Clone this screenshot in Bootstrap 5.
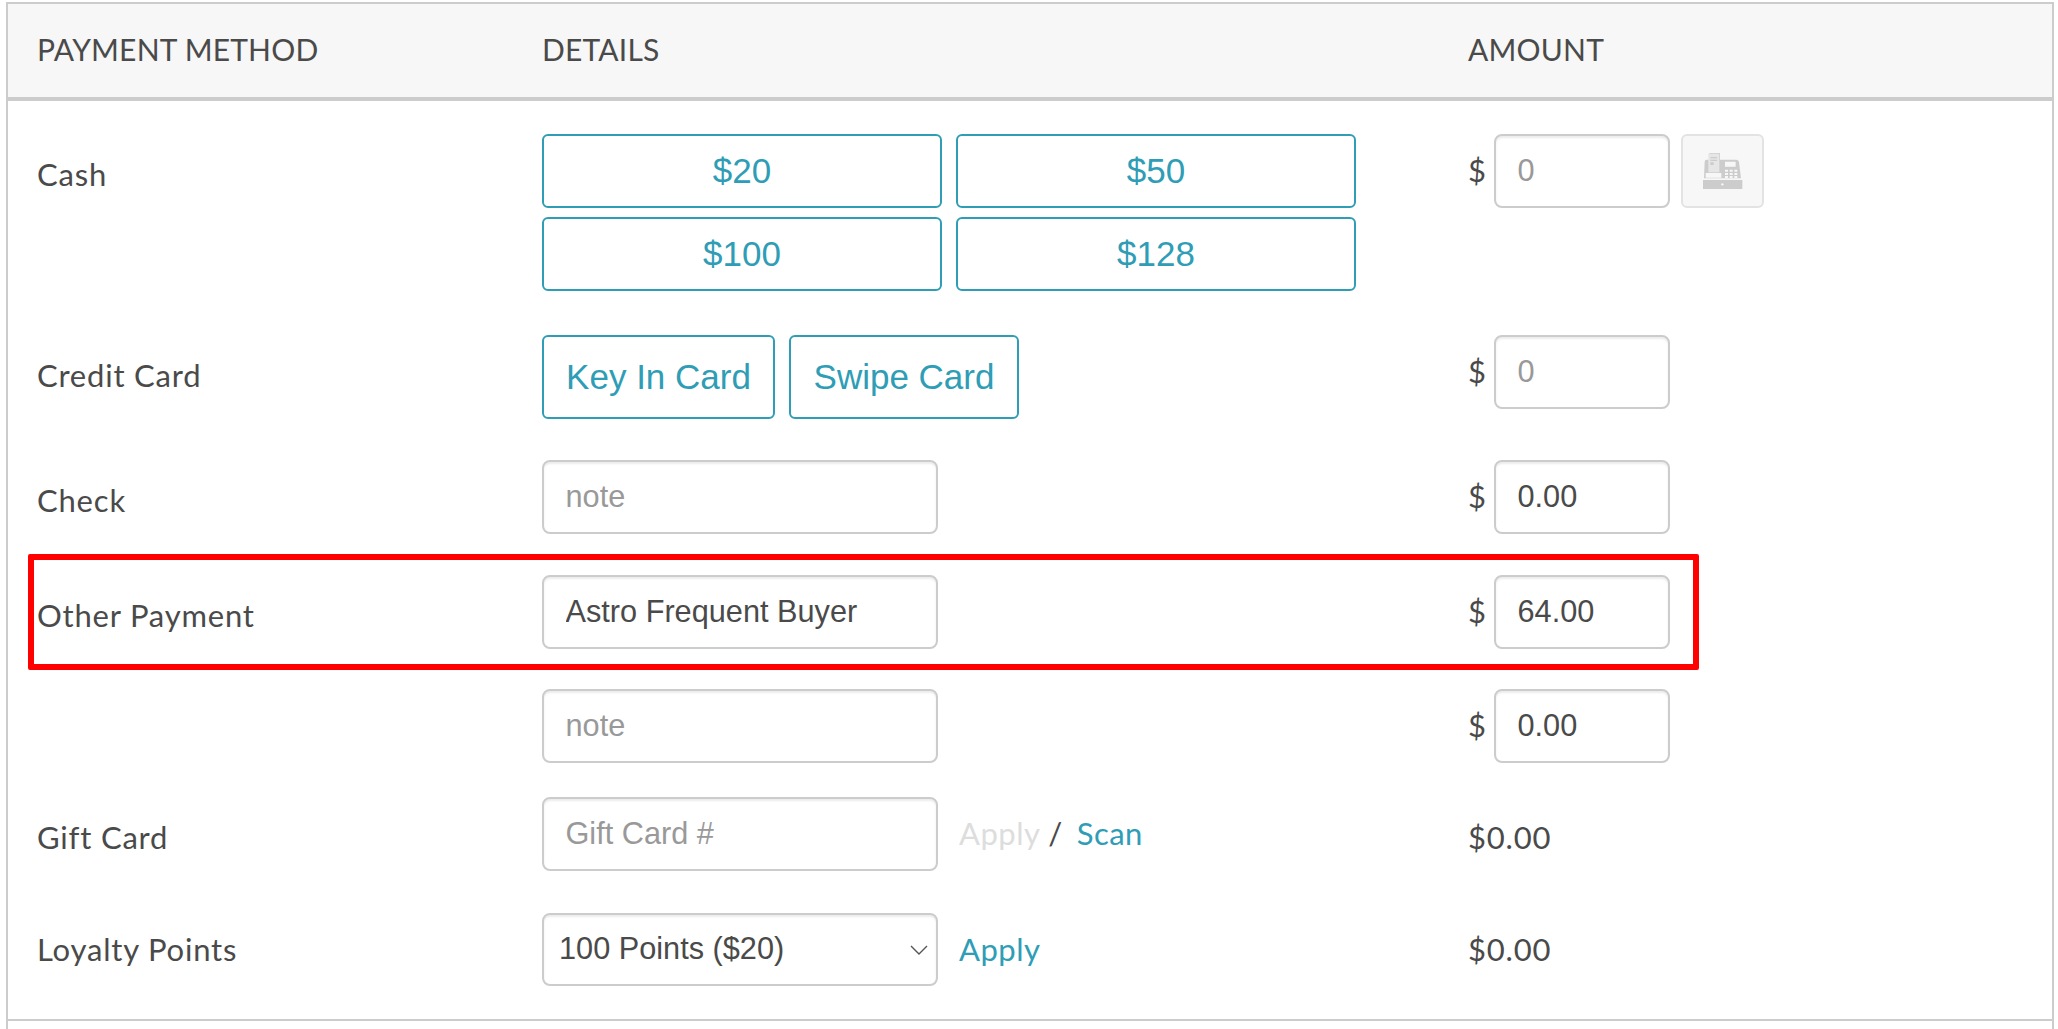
<!DOCTYPE html>
<html lang="en">

<head>
    <meta charset="UTF-8">
    <meta name="viewport" content="width=device-width, initial-scale=1.0">
    <title>Payment</title>
    <link href="https://cdn.jsdelivr.net/npm/bootstrap@5.3.0/dist/css/bootstrap.min.css" rel="stylesheet">
    <style>
        body {
            height: 1029px;
            overflow: hidden;
            font-family: Lato, "Liberation Sans", sans-serif;
            color: #4a4a4a;
            font-size: 31px;
            letter-spacing: .8px;
        }

        .pay-panel {
            margin: 2px 4px 0 6px;
            height: 1027px;
            border: 2px solid #ccc;
            border-bottom: 0;
        }

        .pay-head {
            height: 97px;
            background: #f7f7f7;
            border-bottom: 4px solid #ccc;
            align-items: center;
            font-size: 30px;
            letter-spacing: .2px;
            padding-bottom: 3px;
        }

        .col-method {
            width: 534px;
            padding-left: 29px;
            flex: none;
        }

        .col-details {
            width: 926px;
            flex: none;
        }

        .pay-body {
            border-bottom: 2px solid #ccc;
            height: 920px;
            position: relative;
        }

        .pay-row {
            position: relative;
        }

        .row-cash { padding-top: 33px; }
        .row-credit { padding-top: 44px; }
        .row-check { padding-top: 41px; }
        .row-other { padding-top: 41px; }
        .row-note { padding-top: 40px; }
        .row-gift { padding-top: 34px; }
        .row-loyalty { padding-top: 42px; }

        .pay-label {
            line-height: 40px;
            padding-top: 20px;
        }

        .row-loyalty .pay-label { padding-top: 16px; }

        .cash-grid {
            display: grid;
            grid-template-columns: 400px 400px;
            grid-auto-rows: 74px;
            gap: 9px 14px;
        }

        .btn.btn-pay {
            --bs-btn-color: #2e9db5;
            --bs-btn-border-color: #2e9db5;
            --bs-btn-hover-color: #fff;
            --bs-btn-hover-bg: #2e9db5;
            --bs-btn-hover-border-color: #2e9db5;
            --bs-btn-border-width: 2px;
            --bs-btn-border-radius: 6px;
            font-family: "Liberation Sans", sans-serif;
            font-size: 35px;
            line-height: 1;
            letter-spacing: 0;
            padding-bottom: 8px;
        }

        .btn.btn-card {
            height: 84px;
            width: 233px;
            padding: 0 0 2px;
        }

        .btn.btn-swipe { width: 230px; }

        .card-gap { gap: 14px; }

        .form-control.pay-input,
        .form-select.pay-input {
            height: 74px;
            border: 2px solid #ccc;
            border-radius: 8px;
            box-shadow: inset 0 2px 2px rgba(0, 0, 0, .08);
            font-family: "Liberation Sans", sans-serif;
            font-size: 30.7px;
            letter-spacing: 0;
            color: #4a4a4a;
            padding: 0 21.5px 1px;
        }

        .pay-input::placeholder {
            color: #999;
        }

        .input-note {
            width: 396px;
            flex: none;
        }

        .input-amount {
            width: 176px;
            flex: none;
        }

        .form-select.input-points {
            padding: 0 40px 0 15px;
            height: 73px;
            background-image: url("data:image/svg+xml,%3csvg xmlns='http://www.w3.org/2000/svg' viewBox='0 0 18 10'%3e%3cpath fill='none' stroke='%23555' stroke-width='1.4' d='M1 1l8 8 8-8'/%3e%3c/svg%3e");
            background-size: 18px 10px;
            background-position: right 8px center;
        }

        .dollar {
            width: 26px;
            flex: none;
            line-height: 40px;
            padding-top: 16px;
            letter-spacing: 0;
        }

        .link-pay {
            color: #2e9db5;
            text-decoration: none;
        }

        .link-off {
            color: #ddd;
            text-decoration: none;
        }

        .side-links {
            margin-left: 21px;
            line-height: 40px;
            margin-top: 16px;
            letter-spacing: .5px;
        }

        .link-scan { margin-left: 14px; }

        .till-btn {
            width: 83px;
            height: 74px;
            margin-left: 11px;
            background: #f7f7f7;
            border: 2px solid #e3e3e3;
            border-radius: 6px;
            padding: 0;
        }

        .red-box {
            position: absolute;
            left: 20px;
            top: 20px;
            width: 1671px;
            height: 116px;
            border: 6px solid #f00;
            border-radius: 2px;
            pointer-events: none;
        }
    </style>
</head>

<body>
    <div class="pay-panel">
        <div class="pay-head d-flex">
            <div class="col-method">PAYMENT METHOD</div>
            <div class="col-details">DETAILS</div>
            <div>AMOUNT</div>
        </div>

        <div class="pay-body">
            <div class="pay-row row-cash d-flex">
                <div class="col-method pay-label">Cash</div>
                <div class="col-details">
                    <div class="cash-grid">
                        <button class="btn btn-pay">$20</button>
                        <button class="btn btn-pay">$50</button>
                        <button class="btn btn-pay">$100</button>
                        <button class="btn btn-pay">$128</button>
                    </div>
                </div>
                <div class="d-flex align-items-start">
                    <span class="dollar">$</span>
                    <input class="form-control pay-input input-amount" placeholder="0">
                    <button class="till-btn d-flex align-items-center justify-content-center" disabled>
                        <svg width="40" height="36" viewBox="0 0 120 108">
                            <path fill="#ccc" d="M5 26q0-6 6-6h8V0h32v20h48q8 0 9 8l6 48H3z" />
                            <path fill="#e6e6e6" d="M16 2h33v56H16z" />
                            <path fill="#ccc" d="M22 12h20v4H22zM22 20h20v4H22zM22 28h10v8H22z" />
                            <path fill="#f7f7f7" d="M8 60h47v14H8zM66 26h32v15H66z" />
                            <path fill="#f7f7f7" d="M66 50h9v6h-9zM80 50h9v6h-9zM94 50h9v6h-9zM66 60h9v6h-9zM80 60h9v6h-9zM94 60h9v6h-9zM66 69h9v6h-9zM80 69h9v6h-9zM94 69h9v6h-9z" />
                            <path fill="#ccc" d="M0 81h118v27H0z" />
                            <circle cx="58" cy="94" r="3.5" fill="#f7f7f7" />
                        </svg>
                    </button>
                </div>
            </div>

            <div class="pay-row row-credit d-flex">
                <div class="col-method pay-label">Credit Card</div>
                <div class="col-details d-flex align-items-start card-gap">
                    <button class="btn btn-pay btn-card">Key In Card</button>
                    <button class="btn btn-pay btn-card btn-swipe">Swipe Card</button>
                </div>
                <div class="d-flex align-items-start">
                    <span class="dollar">$</span>
                    <input class="form-control pay-input input-amount" placeholder="0">
                </div>
            </div>

            <div class="pay-row row-check d-flex">
                <div class="col-method pay-label">Check</div>
                <div class="col-details">
                    <input class="form-control pay-input input-note" placeholder="note">
                </div>
                <div class="d-flex align-items-start">
                    <span class="dollar">$</span>
                    <input class="form-control pay-input input-amount" value="0.00">
                </div>
            </div>

            <div class="pay-row row-other d-flex">
                <div class="col-method pay-label">Other Payment</div>
                <div class="col-details">
                    <input class="form-control pay-input input-note" value="Astro Frequent Buyer">
                </div>
                <div class="d-flex align-items-start">
                    <span class="dollar">$</span>
                    <input class="form-control pay-input input-amount" value="64.00">
                </div>
                <div class="red-box"></div>
            </div>

            <div class="pay-row row-note d-flex">
                <div class="col-method pay-label"></div>
                <div class="col-details">
                    <input class="form-control pay-input input-note" placeholder="note">
                </div>
                <div class="d-flex align-items-start">
                    <span class="dollar">$</span>
                    <input class="form-control pay-input input-amount" value="0.00">
                </div>
            </div>

            <div class="pay-row row-gift d-flex">
                <div class="col-method pay-label">Gift Card</div>
                <div class="col-details d-flex align-items-start">
                    <input class="form-control pay-input input-note" placeholder="Gift Card #">
                    <div class="side-links">
                        <a href="#" class="link-off">Apply</a> /<a href="#" class="link-pay link-scan">Scan</a>
                    </div>
                </div>
                <div class="pay-label">$0.00</div>
            </div>

            <div class="pay-row row-loyalty d-flex">
                <div class="col-method pay-label">Loyalty Points</div>
                <div class="col-details d-flex align-items-start">
                    <select class="form-select pay-input input-note input-points">
                        <option>100 Points ($20)</option>
                    </select>
                    <div class="side-links">
                        <a href="#" class="link-pay">Apply</a>
                    </div>
                </div>
                <div class="pay-label">$0.00</div>
            </div>
        </div>
    </div>

    <script src="https://cdn.jsdelivr.net/npm/bootstrap@5.3.0/dist/js/bootstrap.bundle.min.js"></script>
</body>

</html>
